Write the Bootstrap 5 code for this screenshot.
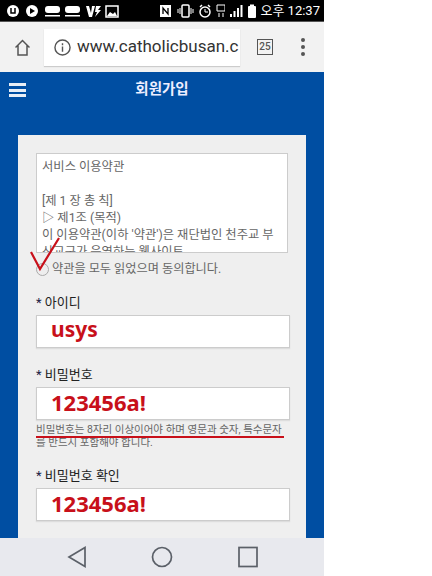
<!DOCTYPE html>
<html lang="ko">
<head>
    <meta charset="UTF-8">
    <meta name="viewport" content="width=device-width, initial-scale=1.0">
    <title>회원가입</title>
    <link rel="stylesheet" href="https://cdn.jsdelivr.net/npm/bootstrap@5.3.0/dist/css/bootstrap.min.css">
    <style>
        html, body { height: 576px; overflow: hidden; background: #fff; }
        body { font-family: "Roboto", "Noto Sans CJK KR", sans-serif; }
        .phone { width: 324px; height: 576px; position: relative; overflow: hidden; }
        .status-bar { height: 22px; background: #000; color: #fff; padding: 0 4px 0 6px; border-bottom: 1px solid #555; }
        .status-time { font-size: 13px; line-height: 1; white-space: nowrap; }
        .chrome-bar { height: 50px; background: #f2f2f2; padding: 0 15px 0 15px; }
        .url-box { width: 196px; height: 37px; margin-left: 14px; background: #fff; box-shadow: 0 1px 1px #ccc; font-size: 17px; color: #333; white-space: nowrap; overflow: hidden; padding-left: 10px; }
        .url-text { margin-left: 6px; }
        .tab-count { width: 16px; height: 16px; margin-left: 17px; border: 1.5px solid #555; font-size: 10px; font-weight: 500; color: #555; line-height: 1; }
        .dots { margin-left: 28px; gap: 3px; }
        .dots i { display: block; width: 4px; height: 4px; border-radius: 50%; background: #555; }
        .blue-area { height: 466px; background: #004ea2; overflow: hidden; }
        .top-title { height: 35px; color: #eef; position: relative; font-size: 14.5px; font-weight: 700; }
        .burger { position: absolute; left: 9px; top: 11px; width: 17px; }
        .burger i { display: block; height: 3px; background: #e8eef6; margin-bottom: 2.5px; }
        .panel { margin: 28px 18px 0; padding: 18px 18px 0; height: 420px; background: #efefef; }
        .terms-box { height: 100px; width: 252px; overflow: hidden; background: #fff; border: 1px solid #ccc; padding: 5px 5px; font-size: 12.3px; line-height: 17px; color: #666; white-space: nowrap; }
        .agree-row { height: 30px; padding-top: 2px; font-size: 12.2px; color: #666; gap: 3px; }
        .radio-dot { width: 13px; height: 13px; border: 1px solid #aaa; border-radius: 50%; background: #eee; flex: none; }
        .field-label { font-size: 13px; color: #222; line-height: 18px; margin-top: 9px; padding-top: 2px; height: 18px; margin-bottom: 5px; }
        .field-label b { font-weight: 400; color: #224; }
        .field-value { height: 33px; width: 254px; background: #fff; border: 1px solid #ccc; box-shadow: 0 1px 1px #ddd; padding-left: 14px; color: #c8101a; font-family: "Noto Sans", sans-serif; font-weight: 700; font-size: 21px; line-height: 26px; }
        .field-value.pw { font-size: 22px; line-height: 29px; }
        .help-text { font-size: 10.5px; line-height: 13px; color: #666; margin-top: 3px; white-space: nowrap; height: 26px; margin-bottom: 16px; }
        .gap-big { margin-top: 16px; }
        .nav-bar { height: 38px; background: #e8e9ee; }
        .red-line { position: absolute; left: 36px; top: 436px; width: 248px; height: 1.5px; background: #c8101a; }
        .check-mark { position: absolute; left: 28px; top: 236px; }
    </style>
</head>
<body>
    <div class="phone">
        <div class="status-bar d-flex align-items-center justify-content-between">
            <svg width="116" height="16" viewBox="0 0 116 16" fill="#fff">
                <circle cx="7" cy="8" r="6"/>
                <path d="M5 5v5h4V5" fill="none" stroke="#000" stroke-width="1.5"/>
                <circle cx="26" cy="8" r="6"/>
                <path d="M24 5l5 3-5 3z" fill="#000"/>
                <rect x="39" y="3" width="15" height="7" rx="3"/>
                <rect x="39" y="12" width="15" height="1.5"/>
                <rect x="59" y="3" width="15" height="7" rx="3"/>
                <rect x="59" y="12" width="15" height="1.5"/>
                <path d="M80 3h3l2 7 1-7h3l-3 11h-3zM90 3h5l-3 4h3l-6 7 2-5h-2z"/>
                <path d="M100 3h12v11h-12z" fill="none" stroke="#fff" stroke-width="1.5"/>
                <path d="M101 13l3-4 3 2 2-2 2 4z"/>
            </svg>
            <div class="d-flex align-items-center gap-1">
                <svg width="73" height="16" viewBox="0 0 73 16" fill="#fff">
                    <path d="M8 2h11v12H8z"/>
                    <path d="M11 11V5l5 6V5" fill="none" stroke="#000" stroke-width="1.3"/>
                    <rect x="30" y="2" width="7" height="12" rx="1" fill="none" stroke="#fff" stroke-width="1.5"/>
                    <path d="M26 6v4M28 5v6M39 5v6M41 6v4" stroke="#fff"/>
                    <circle cx="53" cy="9" r="5" fill="none" stroke="#fff" stroke-width="1.5"/>
                    <path d="M53 6v3h3" fill="none" stroke="#fff"/>
                    <path d="M48 4l2-2M58 4l-2-2" stroke="#fff" stroke-width="1.5"/>
                    <path d="M65 2h8v6h-8zM67 10v4M71 10v4" fill="none" stroke="#fff"/>
                </svg>
                <svg width="27" height="14" viewBox="0 0 27 14" fill="#fff">
                    <rect x="1" y="10" width="2" height="3"/>
                    <rect x="4.500" y="7" width="2" height="6"/>
                    <rect x="8" y="4" width="2" height="9"/>
                    <rect x="11.500" y="1" width="2" height="12"/>
                    <rect x="19" y="2" width="8" height="12" rx="1"/>
                    <rect x="21" y="0.500" width="4" height="2"/>
                </svg>
                <span class="status-time">오후 12:37</span>
            </div>
        </div>

        <div class="chrome-bar d-flex align-items-center">
            <svg width="15" height="17" viewBox="0 0 15 17" fill="none" stroke="#555" stroke-width="1.5">
                <path d="M0.500 8.500L7.500 1.500 14.500 8.500M3 6.500v9.500h9V6.500"/>
            </svg>
            <div class="url-box d-flex align-items-center">
                <svg width="17" height="17" viewBox="0 0 18 18" class="flex-shrink-0" fill="none" stroke="#555" stroke-width="1.500">
                    <circle cx="9" cy="9" r="8"/>
                    <path d="M9 8v5.500M9 4.500v2"/>
                </svg>
                <span class="url-text">www.catholicbusan.c</span>
            </div>
            <div class="tab-count d-flex align-items-center justify-content-center flex-shrink-0">25</div>
            <div class="dots d-flex flex-column"><i></i><i></i><i></i></div>
        </div>

        <div class="blue-area">
            <div class="top-title d-flex align-items-center justify-content-center">
                <div class="burger"><i></i><i></i><i></i></div>
                회원가입
            </div>
            <div class="panel">
                <div class="terms-box">서비스 이용약관<br><br>[제 1 장 총 칙]<br>▷ 제1조 (목적)<br>이 이용약관(이하 '약관')은 재단법인 천주교 부<br>산교구가 운영하는 웹사이트</div>
                <div class="agree-row d-flex align-items-center">
                    <span class="radio-dot"></span>
                    <span>약관을 모두 읽었으며 동의합니다.</span>
                </div>
                <div class="field-label"><b>*</b> 아이디</div>
                <div class="field-value">usys</div>
                <div class="field-label gap-big"><b>*</b> 비밀번호</div>
                <div class="field-value pw">123456a!</div>
                <div class="help-text">비밀번호는 8자리 이상이어야 하며 영문과 숫자, 특수문자<br>를 반드시 포함해야 합니다.</div>
                <div class="field-label"><b>*</b> 비밀번호 확인</div>
                <div class="field-value pw">123456a!</div>
            </div>
        </div>

        <div class="nav-bar d-flex align-items-center justify-content-center">
            <svg width="220" height="24" viewBox="0 0 220 24" fill="none" stroke="#5b6068" stroke-width="1.700">
                <path d="M33 2.500L17 12l16 9.500z"/>
                <circle cx="110" cy="12" r="9.500"/>
                <rect x="187" y="2.500" width="18" height="19"/>
            </svg>
        </div>

        <div class="red-line"></div>
        <svg class="check-mark" width="34" height="40" viewBox="0 0 34 40" fill="none" stroke="#c8101a" stroke-width="2.200">
            <path d="M3 16l9 17L31 2"/>
        </svg>
    </div>
    <script src="https://cdn.jsdelivr.net/npm/bootstrap@5.3.0/dist/js/bootstrap.bundle.min.js"></script>
</body>
</html>
